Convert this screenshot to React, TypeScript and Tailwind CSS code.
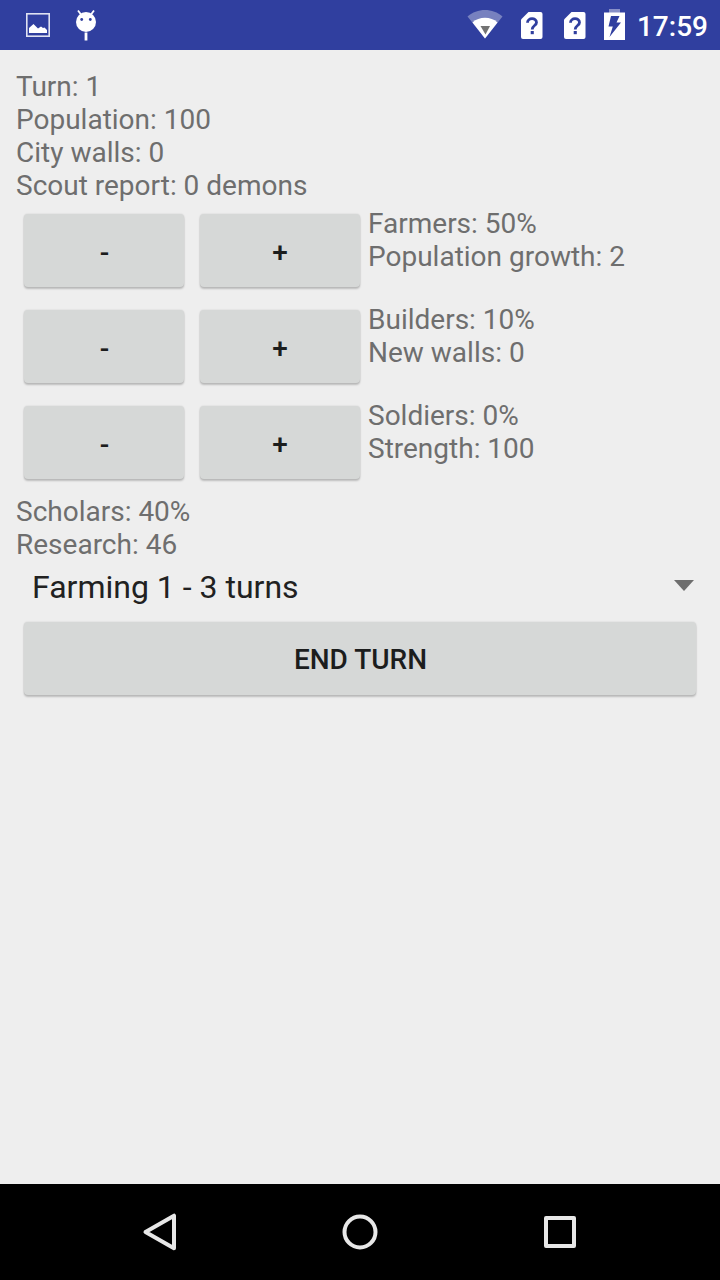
import { useState } from "react"

const cityStats = ["Turn: 1", "Population: 100", "City walls: 0", "Scout report: 0 demons"]

const jobs = [
  { id: "farmers", name: "Farmers", percent: 50, effect: "Population growth: 2" },
  { id: "builders", name: "Builders", percent: 10, effect: "New walls: 0" },
  { id: "soldiers", name: "Soldiers", percent: 0, effect: "Strength: 100" },
]

const BUTTON =
  "h-[73px] rounded-[4px] bg-[#d6d8d7] text-[28px] leading-[33px] font-medium text-[#1c1d1d] shadow-[0_2px_2px_rgba(0,0,0,0.2),0_0_2px_rgba(0,0,0,0.14)]"

const SimIcon = () => (
  <svg width="22" height="27" viewBox="0 0 22 27">
    <path d="M7.500 0H19.500Q21.500 0 21.500 2V25Q21.500 27 19.500 27H2Q0 27 0 25V7.500Z" fill="#fff" />
    <path d="M6.500 10.800C6.500 5.400 15.500 5.400 15.500 10.500C15.500 13.600 11.200 13.500 11.200 17.400" fill="none" stroke="#303f9f" strokeWidth="2.800" />
    <rect x="9.700" y="19" width="3.100" height="3.200" fill="#303f9f" />
  </svg>
)

const StatusBar = () => (
  <header className="flex h-[50px] items-start bg-[#303f9f] text-white">
    {/* Notifications */}
    <svg className="mt-[13px] ml-[26px]" width="24" height="24" viewBox="0 0 24 24">
      <rect x="0.800" y="0.800" width="22.400" height="22.400" fill="none" stroke="#dfe2f2" strokeWidth="1.600" />
      <path d="M3 20V15L7.500 11L12 15.500L15 13.500L17 15L18.500 14.500L21 17V20Z" fill="#fff" />
    </svg>
    <svg className="mt-[9px] ml-[25px]" width="22" height="32" viewBox="0 0 22 32">
      <path d="M3 1.500L6 5.500M19 1.500L16 5.500" stroke="#fff" strokeWidth="1.800" />
      <circle cx="11" cy="13" r="10" fill="#fff" />
      <circle cx="6.700" cy="10.500" r="1.400" fill="#303f9f" />
      <circle cx="15.300" cy="10.500" r="1.400" fill="#303f9f" />
      <rect x="9.600" y="23.500" width="2.800" height="8" fill="#fff" />
    </svg>

    {/* System icons */}
    <div className="ml-auto flex items-start">
      <svg className="mt-[9px]" width="36" height="30" viewBox="0 0 36 30">
        <path d="M18 29.500L0.500 7.500C10 -1.200 26 -1.200 35.500 7.500Z" fill="#7781bf" />
        <path d="M18 29.500L5.500 13.500C12 7.300 24 7.300 30.500 13.500Z" fill="#fff" />
        <path d="M13.500 17H23L18.500 25.500Z" fill="#737373" />
      </svg>
      <div className="mt-[12px] ml-[18px] flex gap-[21px]">
        <SimIcon />
        <SimIcon />
      </div>
      <svg className="mt-[9px] ml-[18px]" width="21" height="31" viewBox="0 0 21 31">
        <path d="M5 -1H16V4H5Z" fill="#8890c7" />
        <rect y="3.500" width="21" height="27.500" fill="#fff" />
        <path d="M7 7H15.500L12.500 13.500H17L5.500 28L8.800 17.500H4.500Z" fill="#303f9f" />
      </svg>
      <span className="mt-[10px] mr-[12px] ml-[12px] text-[28px] leading-[33px] font-medium">17:59</span>
    </div>
  </header>
)

const NavigationBar = () => (
  <nav className="flex h-[96px] items-center justify-between bg-black px-[140px]">
    <svg width="40" height="40" viewBox="0 0 40 40" fill="none" stroke="#e8e8e8" strokeWidth="4" strokeLinejoin="round">
      <path d="M34 3.700V36.300L5.500 20Z" />
    </svg>
    <svg width="40" height="40" viewBox="0 0 40 40" fill="none" stroke="#e8e8e8" strokeWidth="4">
      <circle cx="20" cy="20" r="15.500" />
    </svg>
    <svg width="40" height="40" viewBox="0 0 40 40" fill="none" stroke="#e8e8e8" strokeWidth="4" strokeLinejoin="round">
      <rect x="6" y="6" width="28" height="28" />
    </svg>
  </nav>
)

export default function App() {
  const [research] = useState("Farming 1 - 3 turns")

  return (
    <div className="flex h-screen flex-col bg-[#eeeeee] font-[Roboto,sans-serif]">
      <StatusBar />

      <main className="flex-1 px-4 pt-[20px] text-[28px] leading-[33px] text-[#6e6e6e]">
        {cityStats.map((stat) => (
          <p key={stat}>{stat}</p>
        ))}

        {jobs.map((job) => (
          <div key={job.id} className="flex h-[96px] items-start">
            <button className={`${BUTTON} mt-[12px] ml-[8px] w-[160px] pt-[4px] pl-px`}>-</button>
            <button className={`${BUTTON} mt-[12px] ml-[16px] w-[160px] pt-[4px]`}>+</button>
            <div className="ml-[8px] pt-[5px]">
              <p>
                {job.name}: {job.percent}%
              </p>
              <p>{job.effect}</p>
            </div>
          </div>
        ))}

        <div className="pt-[5px]">
          <p>Scholars: 40%</p>
          <p>Research: 46</p>
        </div>

        {/* Research picker */}
        <button className="flex h-[48px] w-full items-center justify-between pr-[10px] pl-4 text-[32px] leading-[38px] text-[#212121]">
          <span className="pt-[4px]">{research}</span>
          <svg width="20" height="11" viewBox="0 0 20 11" fill="#6e6e6e">
            <path d="M0 0H20L10 11Z" />
          </svg>
        </button>

        <div className="px-[8px] pt-[13px]">
          <button className={`${BUTTON} w-full pt-[2px] pl-px`}>END TURN</button>
        </div>
      </main>

      <NavigationBar />
    </div>
  )
}
